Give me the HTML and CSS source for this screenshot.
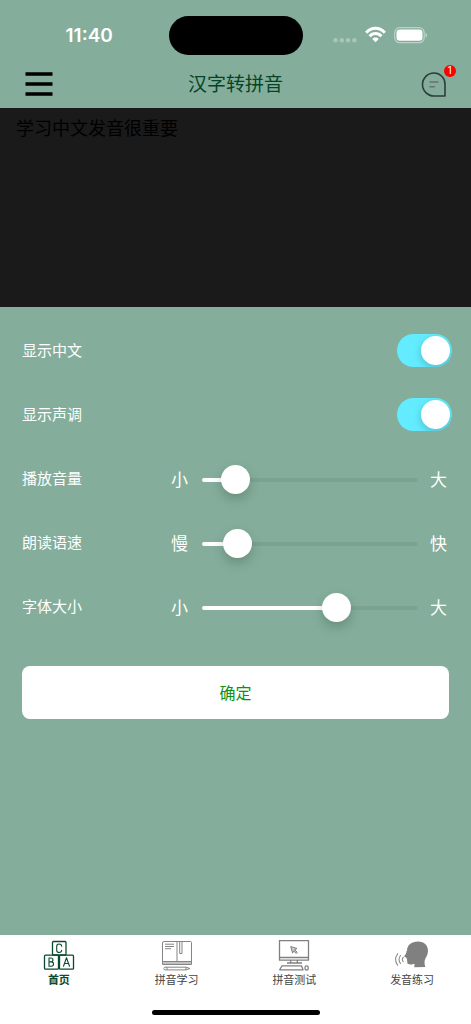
FILE: index.html
```html
<!DOCTYPE html>
<html lang="zh-CN">
<head>
<meta charset="utf-8">
<meta name="viewport" content="width=device-width, initial-scale=1">
<title>汉字转拼音</title>
<link rel="stylesheet" href="styles.css">
</head>
<body>
<header>
  <div class="status-bar">
    <time class="clock">11:40</time>
    <div class="island"></div>
    <div class="indicators">
      <svg width="24" height="18" viewBox="0 0 24 18" fill="#fff" opacity=".3"><circle cx="2.500" cy="14.300" r="2.200"/><circle cx="8.800" cy="14.300" r="2.200"/><circle cx="15.100" cy="14.300" r="2.200"/><circle cx="21.400" cy="14.300" r="2.200"/></svg>
      <svg width="21" height="18" viewBox="0 0 21 18" fill="none" stroke="#fff" stroke-width="2.900"><path d="M1.200 6.800C6.300.8 14.700.8 19.800 6.800"/><path d="M4.600 10.300c3.300-3.700 8.500-3.700 11.800 0"/><path d="M10.500 16.300 7.300 12.900c1.700-1.900 4.700-1.900 6.400 0z" fill="#fff" stroke="none"/></svg>
      <svg width="34" height="18" viewBox="0 0 34 18"><rect x=".7" y="1.700" width="29.500" height="15" rx="5" fill="none" stroke="#fff" stroke-opacity=".45" stroke-width="1.200"/><rect x="2.500" y="3.500" width="26" height="11.300" rx="3.300" fill="#fff"/><path d="M31.500 7c2 .5 2 4 0 4.500z" fill="#fff" fill-opacity=".5"/></svg>
    </div>
  </div>
  <div class="nav-bar">
    <button class="icon-button" type="button" aria-label="菜单">
      <svg width="28" height="26" viewBox="0 0 28 26" fill="none" stroke="#000" stroke-width="3.500"><path d="M.5 3h27M.5 13h27M.5 23h27"/></svg>
    </button>
    <h1>汉字转拼音</h1>
    <button class="icon-button" type="button" aria-label="消息">
      <svg width="28" height="26" viewBox="-3 0 28 26" fill="none"><path d="M13 2a11 11 0 0 0 0 23h11V13A11 11 0 0 0 13 2z" stroke="#2e3d36" stroke-width="1.600" stroke-linejoin="round"/><path d="M9 11h8M9 15.800h4.500" stroke="#6d6f6e" stroke-width="1.500" stroke-linecap="round"/></svg>
      <span class="badge">1</span>
    </button>
  </div>
</header>
<textarea class="source" aria-label="中文文本" spellcheck="false">学习中文发音很重要</textarea>
<main>
  <form class="settings">
    <div class="row"><label for="hanzi">显示中文</label><input class="switch" id="hanzi" type="checkbox" role="switch" checked></div>
    <div class="row"><label for="tone">显示声调</label><input class="switch" id="tone" type="checkbox" role="switch" checked></div>
    <div class="row"><label for="volume">播放音量</label><div class="slider"><span>小</span><input id="volume" type="range" min="0" max="100" value="10" style="--value:10%"><span>大</span></div></div>
    <div class="row"><label for="speed">朗读语速</label><div class="slider"><span>慢</span><input id="speed" type="range" min="0" max="100" value="11" style="--value:11%"><span>快</span></div></div>
    <div class="row"><label for="size">字体大小</label><div class="slider"><span>小</span><input id="size" type="range" min="0" max="100" value="64" style="--value:64%"><span>大</span></div></div>
    <button class="confirm" type="button">确定</button>
  </form>
</main>
<footer>
  <nav class="tabs">
    <a class="tab active" href="#home">
      <svg width="32" height="32" viewBox="0 0 32 32" fill="none" stroke="currentColor" stroke-width="1.300" stroke-linecap="round" stroke-linejoin="round"><rect x="9.500" y="1.500" width="13.500" height="13.500" rx="1"/><rect x="1.500" y="15.200" width="14" height="14" rx="1"/><rect x="16.500" y="15.200" width="14" height="14" rx="1"/><g stroke-width="1.100"><path d="M18.700 6.300c-.2-3-5-3-5 0v4c0 3 4.800 3 5 0M6 18v8.200h2.300c3 0 3-4.300 0-4.300H6h2c2.600 0 2.600-3.900 0-3.900zM20.500 26.200l3-8.400 3 8.400M21.500 23.500h4"/></g></svg>
      <span>首页</span>
    </a>
    <a class="tab" href="#learn">
      <svg width="32" height="32" viewBox="0 0 32 32" fill="none" stroke="#858585" stroke-width="1" stroke-linejoin="round"><path d="M1.500 22.500V3q0-1.500 1.500-1.500h26.500q1 0 1 1v20M1.500 22.500v-1h29v3h-29zM1.500 23h29M16 1.500v20M18.700 2v11.500h2.300V2M4 4.200h9M4 6.500h9M4 8.700h6M6 27.200h19l4 1.300-4 1.400H3.500q-1.500-1.300 0-2.700H6v2.700M25 27.200v2.700"/></svg>
      <span>拼音学习</span>
    </a>
    <a class="tab" href="#test">
      <svg width="32" height="32" viewBox="0 0 32 32" fill="none" stroke="#808080" stroke-width="1.300" stroke-linejoin="round"><path d="M1.500.6h29v19.600h-29zM1.500 17.500h29M12.700 20.500v2.200M19.300 20.500v2.200M9 23h15M4 25.800h19.500l1.500 4H1.700z"/><rect x="27" y="25.800" width="3.200" height="4.200" rx="1.600"/><path d="m12.700 6.500 6.300 2-2.300 1.300 2.600 2.500-1.100 1.200-2.600-2.700-1 2.300z" fill="#ccc" stroke-width="1"/></svg>
      <span>拼音测试</span>
    </a>
    <a class="tab" href="#practice">
      <svg width="34" height="32" viewBox="0 0 34 32"><path d="M12 11C12 5 16.500 1.500 23 1.500s10 4 10 9.500c0 4-2.500 6.500-3.300 9.500-.4 2 0 4.500.6 6.500l-11 .2.200-3.500c-2 .6-6 1.300-7-.2-.5-1 .3-2-.6-3 .5-.6.2-.9-.3-1.500.6-1-.1-1.300-1.300-1.800-1.700-.5-.8-1.300 0-2.500.8-1.400 1.200-2 1.200-3.700z" fill="#808080"/><path d="M8.200 17.300q-1.700 2.200 0 4.400M5.500 15.500q-3 4 0 8M2.700 13.700q-4.200 5.800 0 11.600" fill="none" stroke="#8a8a8a" stroke-width="1.100" stroke-linecap="round"/></svg>
      <span>发音练习</span>
    </a>
  </nav>
  <div class="home-indicator"></div>
</footer>
</body>
</html>
```
FILE: styles.css
```css
* {
  box-sizing: border-box;
}

body {
  margin: 0;
  min-height: 100vh;
  display: flex;
  flex-direction: column;
  background: #84ae9b;
  color: #fff;
  font-family: "Liberation Sans", "Noto Sans CJK SC", sans-serif;
}

button,
input,
textarea {
  margin: 0;
  font-family: inherit;
}

.status-bar {
  display: grid;
  grid-template-columns: 1fr 134px 1fr;
  align-items: center;
  height: 60px;
  padding: 10px 0 0;
}

.clock {
  padding: 2px 0 0 10px;
  text-align: center;
  font: 600 19px/24px Inter, sans-serif;
}

.island {
  height: 39px;
  border-radius: 20px;
  background: #000;
}

.indicators {
  display: flex;
  align-items: center;
  justify-content: center;
  gap: 8px;
  padding-right: 12px;
}

.nav-bar {
  display: flex;
  align-items: center;
  justify-content: space-between;
  height: 48px;
  padding: 0 25px;
}

h1 {
  margin: 0;
  padding-top: 2px;
  color: #044527;
  font-size: 19px;
  line-height: 28px;
  font-weight: 400;
}

.icon-button {
  position: relative;
  display: flex;
  padding: 0;
  border: 0;
  background: none;
}

.badge {
  position: absolute;
  top: -6px;
  right: -10px;
  width: 12px;
  height: 12px;
  border-radius: 50%;
  background: #f00;
  color: #fff;
  font: 10px/12px Roboto, sans-serif;
  text-align: center;
}

.source {
  display: block;
  width: 100%;
  height: 199px;
  padding: 8px 16px;
  border: 0;
  outline: 0;
  resize: none;
  background: #1a1a1a;
  color: #000;
  font-size: 18px;
  line-height: 26px;
}

main {
  flex: 1;
}

.settings {
  padding: 11px 22px 24px;
}

.row {
  display: flex;
  align-items: center;
  height: 64px;
  font-size: 15px;
}

.row label {
  flex: 1 0 149px;
  padding-bottom: 1px;
}

.switch {
  appearance: none;
  display: flex;
  justify-content: flex-end;
  width: 55px;
  height: 33px;
  margin-right: -3px;
  padding: 2px;
  border-radius: 17px;
  overflow: hidden;
  background: #63ecff;
}

.switch::before {
  content: "";
  width: 29px;
  height: 29px;
  border-radius: 50%;
  background: #fff;
  box-shadow: 0 3px 8px rgba(0, 0, 0, 0.2);
}

.switch:not(:checked) {
  justify-content: flex-start;
  background: #789e8d;
}

.slider {
  flex: 1 1 100%;
  display: flex;
  align-items: center;
  gap: 13px;
  padding-right: 2px;
  font-size: 17px;
}

.slider input {
  appearance: none;
  flex: 1;
  min-width: 0;
  height: 29px;
  margin: 3px -1px 0 1px;
  background: none;
}

.slider input::-webkit-slider-runnable-track {
  height: 4px;
  border-radius: 2px;
  background: linear-gradient(to right, #fff var(--value), #7ea292 var(--value));
}

.slider input::-webkit-slider-thumb {
  appearance: none;
  width: 29px;
  height: 29px;
  margin-top: -13px;
  border-radius: 50%;
  background: #fff;
  box-shadow: 0 5px 12px rgba(0, 0, 0, 0.2);
}

.confirm {
  display: block;
  width: 100%;
  height: 53px;
  margin-top: 28px;
  padding: 0 0 2px;
  border: 0;
  border-radius: 8px;
  background: #fff;
  color: #0b9310;
  font-size: 16px;
}

footer {
  height: 89px;
  display: flex;
  flex-direction: column;
  justify-content: space-between;
  align-items: center;
  padding: 5px 0;
  background: #fff;
}

.tabs {
  display: flex;
  width: 100%;
}

.tab {
  flex: 1;
  display: flex;
  flex-direction: column;
  align-items: center;
  color: #444;
  font-size: 11px;
  line-height: 16px;
  text-decoration: none;
}

.tab.active {
  color: #0b4a2d;
  font-weight: 700;
}

.home-indicator {
  width: 168px;
  height: 5px;
  margin-bottom: 4px;
  border-radius: 3px;
  background: #000;
}
```
